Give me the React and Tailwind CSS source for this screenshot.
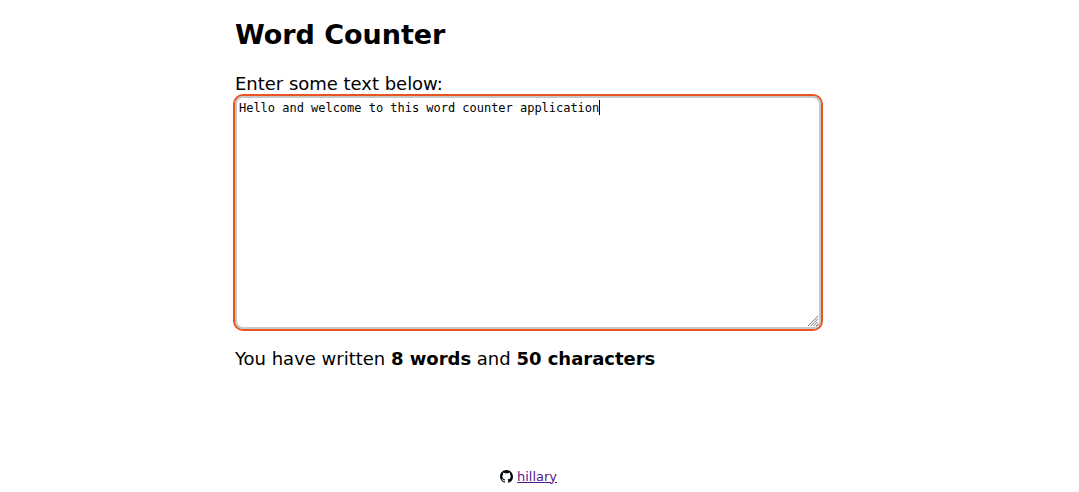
import React, { useState } from "react";

function GithubMark() {
  return (
    <svg className="h-[13px] w-[13px]" viewBox="0 0 16 16" fill="#000711" aria-hidden="true">
      <path fillRule="evenodd" d="M8 0C3.58 0 0 3.58 0 8c0 3.54 2.29 6.53 5.47 7.59.4.07.55-.17.55-.38 0-.19-.01-.82-.01-1.49-2.01.37-2.53-.49-2.69-.94-.09-.23-.48-.94-.82-1.13-.28-.15-.68-.52-.01-.53.63-.01 1.08.58 1.23.82.72 1.21 1.87.87 2.33.66.07-.52.28-.87.51-1.07-1.78-.2-3.64-.89-3.64-3.95 0-.87.31-1.59.82-2.15-.08-.2-.36-1.02.08-2.12 0 0 .67-.21 2.2.82.64-.18 1.32-.27 2-.27s1.36.09 2 .27c1.53-1.04 2.2-.82 2.2-.82.44 1.1.16 1.92.08 2.12.51.56.82 1.27.82 2.15 0 3.07-1.87 3.75-3.65 3.95.29.25.54.73.54 1.48 0 1.07-.01 1.93-.01 2.2 0 .21.15.46.55.38A8.01 8.01 0 0 0 16 8c0-4.42-3.58-8-8-8z" />
    </svg>
  );
}

export default function App() {
  const [text, setText] = useState("Hello and welcome to this word counter application");
  const words = text.trim() ? text.trim().split(/\s+/).length : 0;
  return (
    <div className="flex h-[492px] flex-col bg-white font-['DejaVu_Sans',sans-serif] text-black">
      <main className="ml-[235px] w-[587px] pt-[19px] text-[18px]">
        <h1 className="text-[27px] leading-8 font-bold tracking-[-0.03px]">Word Counter</h1>
        <label htmlFor="text" className="mt-[22px] block leading-[21px] tracking-[-0.02px]">Enter some text below:</label>
        <div className="relative -ml-[2px] h-[237px] w-[590px] rounded-[10px] border-2 border-[#e95420] bg-[#c8c8c8]">
          <textarea
            id="text"
            value={text}
            spellCheck={false}
            onChange={(e) => setText(e.target.value)}
            className="block h-full w-full resize-none rounded-[8px] border-2 border-[#c8c8c8] bg-white px-[2px] py-[3px] font-['DejaVu_Sans_Mono',monospace] text-[12px] leading-[15px] tracking-[-0.02px] outline-none"
          />
          <span className="absolute top-[4px] left-[364px] h-[15px] w-px bg-black" />
          <svg className="absolute right-[3px] bottom-[3px] h-[10px] w-[10px]" viewBox="0 0 10 10" stroke="#777" fill="none">
            <path d="M0 10L10 0M2.7 10L10 2.7M5.4 10L10 5.4M8 10L10 8" />
          </svg>
        </div>
        <p className="mt-[17px] leading-[21px] tracking-[-0.01px]">
          You have written <strong>{words} words</strong> and <strong>{text.length} characters</strong>
        </p>
      </main>
      <footer className="mt-auto mb-px ml-[235px] flex h-[30px] w-[587px] items-center justify-center gap-1 text-[13px] leading-[15px]">
        <GithubMark />
        <a href="#" className="text-[#551a8b] underline">hillary</a>
      </footer>
    </div>
  );
}
